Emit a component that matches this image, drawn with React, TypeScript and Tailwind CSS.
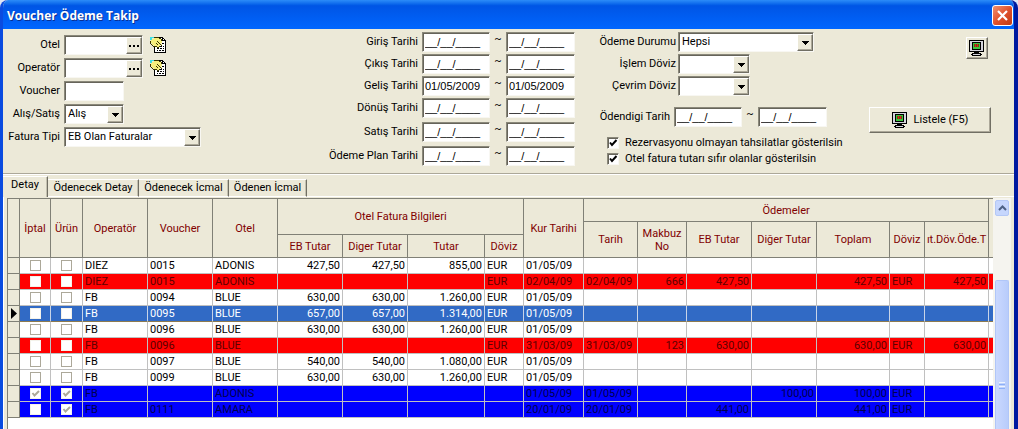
import React, { useState } from 'react';
import clsx from 'clsx';

type Tone = 'plain' | 'red' | 'blue' | 'selected';

interface Row {
  tone: Tone;
  iptal?: boolean;
  urun?: boolean;
  // operator, voucher, hotel, EB, other, total, currency, rate date, date, receipt, EB, other, total, currency, currency total
  cells: string[];
}

const rows: Row[] = [
  { tone: 'plain', cells: ['DIEZ', '0015', 'ADONIS', '427,50', '427,50', '855,00', 'EUR', '01/05/09', '', '', '', '', '', '', ''] },
  { tone: 'red', cells: ['DIEZ', '0015', 'ADONIS', '', '', '', 'EUR', '02/04/09', '02/04/09', '666', '427,50', '', '427,50', 'EUR', '427,50'] },
  { tone: 'plain', cells: ['FB', '0094', 'BLUE', '630,00', '630,00', '1.260,00', 'EUR', '01/05/09', '', '', '', '', '', '', ''] },
  { tone: 'selected', cells: ['FB', '0095', 'BLUE', '657,00', '657,00', '1.314,00', 'EUR', '01/05/09', '', '', '', '', '', '', ''] },
  { tone: 'plain', cells: ['FB', '0096', 'BLUE', '630,00', '630,00', '1.260,00', 'EUR', '01/05/09', '', '', '', '', '', '', ''] },
  { tone: 'red', cells: ['FB', '0096', 'BLUE', '', '', '', 'EUR', '31/03/09', '31/03/09', '123', '630,00', '', '630,00', 'EUR', '630,00'] },
  { tone: 'plain', cells: ['FB', '0097', 'BLUE', '540,00', '540,00', '1.080,00', 'EUR', '01/05/09', '', '', '', '', '', '', ''] },
  { tone: 'plain', cells: ['FB', '0099', 'BLUE', '630,00', '630,00', '1.260,00', 'EUR', '01/05/09', '', '', '', '', '', '', ''] },
  { tone: 'blue', iptal: true, urun: true, cells: ['FB', '', 'ADONIS', '', '', '', '', '01/05/09', '01/05/09', '', '', '100,00', '100,00', 'EUR', ''] },
  { tone: 'blue', urun: true, cells: ['FB', '0111', 'AMARA', '', '', '', '', '20/01/09', '20/01/09', '', '441,00', '', '441,00', 'EUR', ''] },
];

const numericColumns = [3, 4, 5, 9, 10, 11, 12, 14];

const toneClasses: Record<Tone, string> = {
  plain: 'bg-white text-black',
  red: 'bg-[#ff0000] text-[#5c0000]',
  blue: 'bg-[#0000ff] text-[#00004d]',
  selected: 'bg-[#316ac5] text-white',
};

const sunken =
  'border border-t-[#8a887a] border-l-[#8a887a] border-r-[#f8f7f2] border-b-[#f8f7f2] bg-white shadow-[inset_1px_1px_0_#66645a]';
const raised =
  'border border-t-white border-l-white border-r-[#716f64] border-b-[#716f64] bg-[#ece9d8] shadow-[inset_-1px_-1px_0_#aca899]';

const MonitorIcon = () => (
  <svg width="16" height="16" viewBox="0 0 16 16" shapeRendering="crispEdges" aria-hidden="true">
    <path fill="#000" d="M0 0h15v12H0z" />
    <path fill="#d4d4dc" d="M1 1h13v10H1z" />
    <path fill="#000" d="M3 2h9v8H3z" />
    <path fill="#3cc43c" d="M4 3h7v6H4z" />
    <path fill="#6b4a10" d="M5 4h5v3H5z" />
    <path fill="#e02020" d="M6 4h1v3H6zM8 4h1v3H8z" />
    <path fill="#000" d="M5 12h5v1H5zM3 13h9v1H3zM2 14h11v1H2z" />
    <path fill="#d4d4dc" d="M4 14h7v1H4z" />
    <path fill="#000" d="M3 15h9v1H3z" />
  </svg>
);

const NoteIcon = () => (
  <svg width="17" height="17" viewBox="0 0 17 17" shapeRendering="crispEdges" aria-hidden="true">
    <path fill="#fff" stroke="#000" d="M4.5 5.5h1v-5h7l3 3v12h-11z" />
    <path fill="none" stroke="#000" d="M12.5.5v3h3" />
    <path fill="#000" d="M9 6h2v1H9zM12 6h2v1h-2zM10 9h2v1h-2zM13 9h1v1h-1zM7 11h2v1H7zM10 11h2v1h-2zM13 11h1v1h-1zM7 13h1v1H7zM9 13h2v1H9zM12 13h2v1h-2z" />
    <path fill="#f6ef7c" d="M2 2h2V1h5v1h2v2h1v2h-1v1h1v2h-1V8h-1v1H9v1H7V9H4V8H2V6H1V3h1z" />
    <path fill="#3a3600" d="M4 0h5v1H4zM9 1h2v1H9zM11 2h1v2h-1zM0 4h1v3H0zM1 7h1v1H1zM2 8h1v1H2zM3 9h4v1H3zM7 10h2v1H7zM7 4h1v1H7zM8 5h1v1H8zM9 6h1v1H9zM10 7h1v1h-1zM11 8h1v1h-1zM6 6h1v1H6zM7 7h1v1H7zM9 9h1v1H9z" />
    <path fill="#3fe0e0" d="M0 0h4v1H2v2H0z" />
  </svg>
);

const DropArrow = () => (
  <span className={clsx(raised, 'pointer-events-none absolute top-0.5 right-px bottom-px flex w-4 items-center justify-center')}>
    <svg width="7" height="4" viewBox="0 0 7 4" shapeRendering="crispEdges" aria-hidden="true">
      <path d="M0 0h7v1H0zM1 1h5v1H1zM2 2h3v1H2zM3 3h1v1H3z" />
    </svg>
  </span>
);

interface ComboProps {
  id: string;
  options: string[];
  className: string;
}

const Combo: React.FC<ComboProps> = ({ id, options, className }) => (
  <div className={clsx('relative h-5', className)}>
    <select id={id} className={clsx(sunken, 'block h-5 w-full appearance-none pl-[3px] outline-none')}>
      {options.map((option) => (
        <option key={option}>{option}</option>
      ))}
    </select>
    <DropArrow />
  </div>
);

const Lookup: React.FC<{ id: string; label: string }> = ({ id, label }) => (
  <>
    <div className={clsx(sunken, 'flex h-5 w-[79px] pt-px')}>
      <input id={id} className="w-full min-w-0 flex-1 bg-transparent pl-1 outline-none" />
      <button type="button" aria-label={`${label} seç`} className={clsx(raised, 'flex w-4 items-center justify-center gap-0.5')}>
        <span className="size-0.5 bg-black" />
        <span className="size-0.5 bg-black" />
        <span className="size-0.5 bg-black" />
      </button>
    </div>
    <button type="button" aria-label={`${label} listesi`} className="ml-[7px]">
      <NoteIcon />
    </button>
  </>
);

interface DateRangeProps {
  id: string;
  label: string;
  value?: string;
  labelClass: string;
}

const dateInput = "h-5 pl-0.5 font-['Liberation_Sans',Arial,sans-serif] outline-none";

const DateRange: React.FC<DateRangeProps> = ({ id, label, value = '__/__/____', labelClass }) => (
  <div className="flex h-5 items-center">
    <label htmlFor={id} className={clsx('text-right', labelClass)}>{label}</label>
    <input id={id} defaultValue={value} className={clsx(sunken, dateInput, 'w-[68px]')} />
    <span className="w-4 self-start text-center">~</span>
    <input aria-label={`${label} bitiş`} defaultValue={value} className={clsx(sunken, dateInput, 'w-[69px]')} />
  </div>
);

const FormRow: React.FC<{ id: string; label: string; labelClass: string; children: React.ReactNode }> = ({ id, label, labelClass, children }) => (
  <div className="flex h-5 items-center">
    <label htmlFor={id} className={clsx('text-right', labelClass)}>{label}</label>
    {children}
  </div>
);

const Option: React.FC<{ label: string }> = ({ label }) => {
  const [checked, setChecked] = useState(true);
  return (
    <label className="flex h-4 items-center gap-1.5">
      <span className="relative size-3">
        <input
          type="checkbox"
          checked={checked}
          onChange={() => setChecked(!checked)}
          className={clsx(sunken, 'block size-3 appearance-none')}
        />
        {checked && (
          <svg className="pointer-events-none absolute inset-0" width="12" height="12" viewBox="0 0 12 12" aria-hidden="true">
            <path d="M3 5.5l2 2.5 4.5-5" fill="none" stroke="#000" strokeWidth="2" />
          </svg>
        )}
      </span>
      {label}
    </label>
  );
};

const GridCheck: React.FC<{ checked?: boolean; label: string; tone: Tone }> = ({ checked = false, label, tone }) => (
  <span className="relative mx-auto block size-[11px]">
    <input
      type="checkbox"
      readOnly
      checked={checked}
      aria-label={label}
      className={clsx('block size-[11px] appearance-none border bg-white', tone === 'plain' ? 'border-[#aca899]' : 'border-[#f4f2ea]')}
    />
    {checked && (
      <svg className="pointer-events-none absolute inset-0" width="11" height="11" viewBox="0 0 11 11" aria-hidden="true">
        <path d="M2.5 5l2 2.5L9 3" fill="none" stroke="#aca899" strokeWidth="2" />
      </svg>
    )}
  </span>
);

const tabs = [
  { name: 'Detay', width: 'w-[45px]' },
  { name: 'Ödenecek Detay', width: 'w-[91px]' },
  { name: 'Ödenecek İcmal', width: 'w-[90px]' },
  { name: 'Ödenen İcmal', width: 'w-[78px]' },
];

const th = 'overflow-hidden border-r border-b border-[#808076] bg-[#ece9d8] p-0 text-center align-middle font-normal leading-[13px] whitespace-nowrap';

const Header = () => (
  <thead className="text-[#800000]">
    <tr className="h-[23px]">
      <th rowSpan={3} className={th} aria-label="Seçim" />
      <th rowSpan={3} className={th}>İptal</th>
      <th rowSpan={3} className={th}>Ürün</th>
      <th rowSpan={3} className={th}>Operatör</th>
      <th rowSpan={3} className={th}>Voucher</th>
      <th rowSpan={3} className={th}>Otel</th>
      <th rowSpan={2} colSpan={4} className={th}>Otel Fatura Bilgileri</th>
      <th rowSpan={3} className={th}>Kur Tarihi</th>
      <th colSpan={7} className={th}>Ödemeler</th>
      <td rowSpan={3} className="border-b border-[#808076] bg-[#ece9d8] p-0" />
    </tr>
    <tr className="h-[13px]">
      <th rowSpan={2} className={th}>Tarih</th>
      <th rowSpan={2} className={th}>Makbuz<br />No</th>
      <th rowSpan={2} className={th}>EB Tutar</th>
      <th rowSpan={2} className={th}>Diğer Tutar</th>
      <th rowSpan={2} className={th}>Toplam</th>
      <th rowSpan={2} className={th}>Döviz</th>
      <th rowSpan={2} className={th}>ıt.Döv.Öde.T</th>
    </tr>
    <tr className="h-[23px]">
      <th className={th}>EB Tutar</th>
      <th className={th}>Diger Tutar</th>
      <th className={th}>Tutar</th>
      <th className={th}>Döviz</th>
    </tr>
  </thead>
);

const DataRow: React.FC<{ row: Row }> = ({ row }) => {
  const line = row.tone === 'selected' ? 'border-r-[#c8d4e8] border-b-[#8c7a50]' : 'border-[#c0c0c0]';
  const td = clsx('h-4 overflow-hidden border-r border-b p-0 leading-[15px] whitespace-nowrap', line);
  return (
    <tr className={clsx('h-4', toneClasses[row.tone])}>
      <td className="h-4 border-r border-b border-[#808076] bg-[#ece9d8] p-0">
        {row.tone === 'selected' && (
          <svg className="ml-0.5" width="7" height="11" viewBox="0 0 7 11" aria-hidden="true">
            <path d="M1 0l6 5.5L1 11z" fill="#000" />
          </svg>
        )}
      </td>
      <td className={td}><GridCheck checked={row.iptal} label="İptal" tone={row.tone} /></td>
      <td className={td}><GridCheck checked={row.urun} label="Ürün" tone={row.tone} /></td>
      {row.cells.map((cell, idx) => (
        <td key={idx} className={clsx(td, numericColumns.includes(idx) ? 'pr-0.5 text-right' : 'pl-0.5')}>{cell}</td>
      ))}
      <td className={clsx('h-4 border-b p-0', line)} />
    </tr>
  );
};

const App: React.FC = () => {
  const [activeTab, setActiveTab] = useState('Detay');

  return (
    <div className="min-w-[1000px] overflow-hidden bg-[#dfe6f5] font-[Roboto,'Liberation_Sans',sans-serif] text-[11px] leading-[14px] text-black">
      <div className="overflow-hidden rounded-t-lg border-r-4 border-l-3 border-r-[#0019a0] border-l-[#0a4be0] bg-[#ece9d8]">
        <header className="-mr-1 -ml-[3px] flex h-[29px] items-center justify-between bg-linear-to-b from-[#2c8cf8] via-[#0055e5] via-20% to-[#0066ff] pt-0.5 pr-[5px] pl-[7px]">
          <h1 className="font-['Open_Sans',sans-serif] text-[12px] font-bold text-white [text-shadow:1px_1px_0_#0b2f92]">Voucher Ödeme Takip</h1>
          <button
            type="button"
            aria-label="Kapat"
            className="flex size-[21px] items-center justify-center rounded-[3px] border border-white bg-linear-to-br from-[#f0906f] via-[#e0512c] to-[#c23a12]"
          >
            <svg width="13" height="13" viewBox="0 0 13 13" aria-hidden="true">
              <path d="M2 2l9 9M11 2l-9 9" stroke="#fff" strokeWidth="2.2" />
            </svg>
          </button>
        </header>

        <form className="flex h-36 items-start pt-[3px]" onSubmit={(e) => e.preventDefault()}>
          <div className="mt-[3px] flex w-[320px] flex-col gap-[3px]">
            <FormRow id="otel" label="Otel" labelClass="w-[61px] pr-1">
              <Lookup id="otel" label="Otel" />
            </FormRow>
            <FormRow id="operator" label="Operatör" labelClass="w-[61px] pr-1">
              <Lookup id="operator" label="Operatör" />
            </FormRow>
            <FormRow id="voucher" label="Voucher" labelClass="w-[61px] pr-1">
              <input id="voucher" className={clsx(sunken, 'h-5 w-[60px] pl-[3px] outline-none')} />
            </FormRow>
            <FormRow id="alis" label="Alış/Satış" labelClass="w-[61px] pr-1">
              <Combo id="alis" options={['Alış', 'Satış']} className="w-[60px]" />
            </FormRow>
            <FormRow id="fatura" label="Fatura Tipi" labelClass="w-[61px] pr-1">
              <Combo id="fatura" options={['EB Olan Faturalar']} className="w-[137px]" />
            </FormRow>
          </div>

          <div className="flex flex-col gap-1">
            <div className="flex flex-col gap-0.5">
              <DateRange id="giris" label="Giriş Tarihi" labelClass="w-[99px] pr-1" />
              <DateRange id="cikis" label="Çıkış Tarihi" labelClass="w-[99px] pr-1" />
              <DateRange id="gelis" label="Geliş Tarihi" value="01/05/2009" labelClass="w-[99px] pr-1" />
              <DateRange id="donus" label="Dönüş Tarihi" labelClass="w-[99px] pr-1" />
            </div>
            <DateRange id="satis" label="Satış Tarihi" labelClass="w-[99px] pr-1" />
            <DateRange id="plan" label="Ödeme Plan Tarihi" labelClass="w-[99px] pr-1" />
          </div>

          <div className="ml-5 flex flex-col">
            <div className="flex flex-col gap-0.5">
              <FormRow id="durum" label="Ödeme Durumu" labelClass="w-[83px] pr-0.5">
                <Combo id="durum" options={['Hepsi']} className="w-[136px]" />
              </FormRow>
              <FormRow id="islem" label="İşlem Döviz" labelClass="w-[83px] pr-0.5">
                <Combo id="islem" options={['', 'EUR']} className="w-[72px]" />
              </FormRow>
              <FormRow id="cevrim" label="Çevrim Döviz" labelClass="w-[83px] pr-0.5">
                <Combo id="cevrim" options={['', 'EUR']} className="w-[72px]" />
              </FormRow>
            </div>
            <div className="mt-[11px]">
              <DateRange id="odendigi" label="Ödendigi Tarih" labelClass="w-[79px] pr-1" />
            </div>
            <div className="mt-2 ml-3">
              <Option label="Rezervasyonu olmayan tahsilatlar gösterilsin" />
              <Option label="Otel fatura tutarı sıfır olanlar gösterilsin" />
            </div>
          </div>

          <div className="mt-[5px] mr-[23px] ml-auto flex flex-col items-end gap-12">
            <button type="button" aria-label="Ekran" className={clsx(raised, 'mr-[3px] flex size-[22px] items-center justify-center')}>
              <MonitorIcon />
            </button>
            <button type="submit" className={clsx(raised, 'flex h-[26px] w-[122px] items-center justify-center gap-1.5')}>
              <MonitorIcon />
              Listele (F5)
            </button>
          </div>
        </form>

        <div role="tablist" className="flex h-6 items-end border-t border-[#aca899] shadow-[inset_0_1px_0_#fff]">
          {tabs.map((tab) => (
            <button
              key={tab.name}
              type="button"
              role="tab"
              aria-selected={activeTab === tab.name}
              onClick={() => setActiveTab(tab.name)}
              className={clsx(
                'border-t border-r border-t-white border-r-[#716f64] text-center whitespace-nowrap shadow-[inset_-1px_0_0_#c4c1b0]',
                tab.width,
                activeTab === tab.name ? 'h-[21px] pb-1' : 'h-[18px] border-b border-b-white',
              )}
            >
              {tab.name}
            </button>
          ))}
          <span className="flex-1 border-b border-white" />
        </div>

        <div className="flex border-l border-white pt-px pr-[3px] pl-[3px]">
          <div className="min-w-0 flex-1 border-t border-l border-[#808076] bg-white pb-[11px]">
            <table className="w-full table-fixed border-separate border-spacing-0">
              <colgroup>
                <col className="w-3" />
                <col className="w-[31px]" />
                <col className="w-[32px]" />
                <col className="w-[65px]" />
                <col className="w-[65px]" />
                <col className="w-[65px]" />
                <col className="w-[65px]" />
                <col className="w-[65px]" />
                <col className="w-[77px]" />
                <col className="w-[39px]" />
                <col className="w-[60px]" />
                <col className="w-[54px]" />
                <col className="w-[49px]" />
                <col className="w-[65px]" />
                <col className="w-[65px]" />
                <col className="w-[73px]" />
                <col className="w-[35px]" />
                <col className="w-[64px]" />
                <col />
              </colgroup>
              <Header />
              <tbody>
                {rows.map((row, idx) => (
                  <DataRow key={idx} row={row} />
                ))}
              </tbody>
            </table>
          </div>

          {/* Vertical scroll bar */}
          <div className="flex w-[18px] flex-col bg-[#f5f4ef] px-0.5 pt-0.5">
            <button type="button" aria-label="Yukarı" className="flex h-4 items-center justify-center rounded-[2px] border border-[#b4c8f6] bg-[#c6d6fd]">
              <svg width="9" height="6" viewBox="0 0 9 6" aria-hidden="true">
                <path d="M1 5l3.500-3.500L8 5" fill="none" stroke="#4d6185" strokeWidth="2" />
              </svg>
            </button>
            <div className="mt-16 flex flex-1 flex-col items-center gap-px rounded-t-[2px] border-x border-t border-[#b0c6f8] bg-linear-to-r from-[#cad8fe] to-[#b8ccfb] pt-[101px]">
              <span className="h-px w-1.5 bg-[#eef4fe]" />
              <span className="h-px w-1.5 bg-[#8cb0f8]" />
              <span className="h-px w-1.5 bg-[#eef4fe]" />
              <span className="h-px w-1.5 bg-[#8cb0f8]" />
            </div>
          </div>
        </div>
      </div>
    </div>
  );
};

export default App;
